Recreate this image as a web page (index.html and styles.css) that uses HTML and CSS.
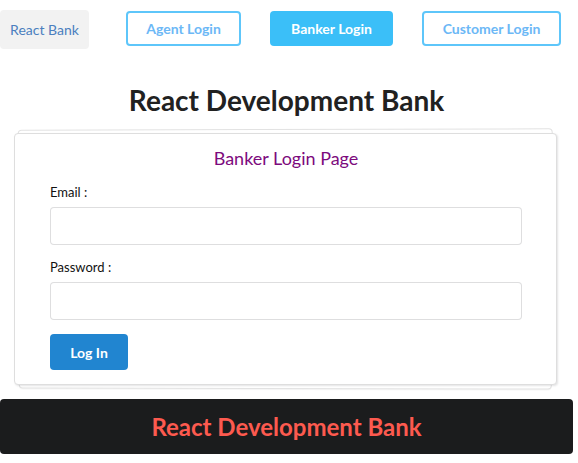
FILE: index.html
```html
<!DOCTYPE html>
<html>
<head>
<meta charset="utf-8">
<link rel="stylesheet" href="styles.css">
</head>
<body>
<div class="nav">
  <a class="brand">React Bank</a>
  <a class="btn outline agent">Agent Login</a>
  <a class="btn filled banker">Banker Login</a>
  <a class="btn outline customer">Customer Login</a>
</div>
<h1 class="title">React Development Bank</h1>
<div class="segment">
  <h2 class="page-title">Banker Login Page</h2>
  <form class="form">
    <div class="field">
      <label>Email :</label>
      <input type="text">
    </div>
    <div class="field">
      <label>Password :</label>
      <input type="password">
    </div>
    <button type="button" class="login">Log In</button>
  </form>
</div>
<div class="footer">React Development Bank</div>
</body>
</html>
```
FILE: styles.css
```css
html { background: #fff; }
html, body { margin: 0; padding: 0; }
body { font-family: Lato, "Open Sans", sans-serif; width: 573px; font-size: 14px; color: rgba(0,0,0,.87); }

.nav { display: flex; align-items: center; height: 57px; }
.brand {
  display: flex; align-items: center; justify-content: center;
  width: 89px; height: 39px; margin-top: 1px; box-sizing: border-box;
  background: #f2f2f2; border-radius: 4px; color: #4b7fbf; font-size: 14px;
}
.btn {
  display: flex; align-items: center; justify-content: center;
  height: 35px; box-sizing: border-box; border-radius: 4px;
  font-size: 14px; font-weight: 700;
}
.outline { border: 2px solid #5ec6fa; color: #6cb8f6; background: #fff; }
.filled { background: #3bbff8; color: #fff; }
.agent { width: 115px; margin-left: 37px; }
.banker { width: 123px; margin-left: 29px; }
.customer { width: 139px; margin-left: 29px; }

.title {
  margin: 27px 0 0; text-align: center; font-size: 28px; font-weight: 700;
  color: #212121; line-height: 32px; padding-left: 0;
}

.segment {
  position: relative; margin: 17px 16px 0 14px; background: #fff;
  border: 1px solid #dedede; border-radius: 4px;
  box-shadow: 1px 1px 2px rgba(34,36,38,.12);
  padding: 13px 34px 14px 35px;
}
.segment::before, .segment::after {
  content: ""; position: absolute; left: 3px; right: 3px;
  background: #fff; border: 1px solid #e2e2e2; border-radius: 4px;
  z-index: -1; box-shadow: 0 1px 1px rgba(0,0,0,.04);
}
.segment::before { top: -5px; bottom: 5px; transform: rotate(-0.15deg); }
.segment::after { top: 5px; bottom: -5px; left: 4px; right: 4px; transform: rotate(0.1deg); }

.page-title {
  margin: 0; text-align: center; font-size: 18px; font-weight: 400;
  color: #7d0a7d; line-height: 22px;
}
.form { margin-top: 15px; }
.field { margin-bottom: 14px; }
.field label { display: block; font-size: 13px; color: #111; margin-bottom: 7px; line-height: 16px; }
.field input {
  display: block; width: 100%; height: 38px; box-sizing: border-box;
  border: 1px solid rgba(34,36,38,.15); border-radius: 4px; outline: none;
  font-family: inherit; font-size: 14px;
}
.login {
  display: block; width: 78px; height: 36px; border: none; border-radius: 4px;
  background: #2185d0; color: #fff; font-family: inherit; font-weight: 700; font-size: 14px;
}

.footer {
  margin-top: 14px; height: 55px; background: #1b1c1d; border-radius: 4px;
  display: flex; align-items: center; justify-content: center;
  color: #fd5a4f; font-size: 24px; font-weight: 700;
}
```
